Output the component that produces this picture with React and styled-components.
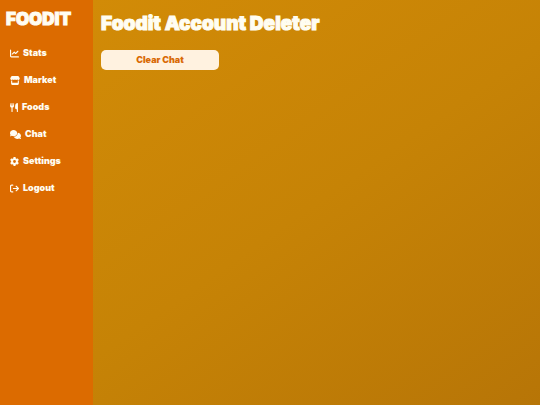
import * as React from 'react';
import styled, { createGlobalStyle } from 'styled-components';
import {
    FaChartLine,
    FaStore,
    FaUtensils,
    FaComments,
    FaGear,
    FaArrowRightFromBracket
} from 'react-icons/fa6';

const GlobalStyle = createGlobalStyle`
    * {
        box-sizing: border-box;
    }

    body {
        margin: 0;
        font-family: "Inter", "Liberation Sans", sans-serif;
        font-weight: 900;
        color: #fffdf2;
    }
`;

const Page = styled.div`
    display: flex;
    min-height: 100vh;
    background: #dc6b00;
`;

const Sidebar = styled.aside`
    flex: none;
    width: 93px;
    padding: 8px 6px;
`;

const Logo = styled.div`
    font-size: 17px;
    line-height: 22px;
    -webkit-text-stroke: 1px currentColor;
`;

const NavList = styled.ul`
    display: flex;
    flex-direction: column;
    gap: 15px;
    margin: 17px 0 0;
    padding: 0 0 0 4px;
    list-style: none;
`;

const NavLink = styled.a`
    display: flex;
    align-items: center;
    gap: 4px;
    font-size: 9px;
    line-height: 12px;
    color: #fffdf2;
    text-decoration: none;

    svg {
        flex: none;
        width: ${(props) => props.$iconWidth}px;
        height: 9px;
    }
`;

const Content = styled.main`
    flex: 1;
    padding: 8px;
    background: linear-gradient(145deg, #d28b07 0%, #c68306 50%, #b77507 100%);
`;

const Title = styled.h1`
    margin: 0 0 11px;
    font-size: 19px;
    font-weight: 900;
    line-height: 31px;
    -webkit-text-stroke: 1px currentColor;
`;

const ClearButton = styled.button`
    display: block;
    width: 118px;
    padding: 4px 8px;
    border: 0;
    border-radius: 5px;
    background: #fff2e0;
    color: #d96a05;
    font: inherit;
    font-size: 9px;
    line-height: 12px;
    cursor: pointer;
`;

const links = [
    { label: 'Stats', Icon: FaChartLine, iconWidth: 9 },
    { label: 'Market', Icon: FaStore, iconWidth: 10 },
    { label: 'Foods', Icon: FaUtensils, iconWidth: 8 },
    { label: 'Chat', Icon: FaComments, iconWidth: 11 },
    { label: 'Settings', Icon: FaGear, iconWidth: 9 },
    { label: 'Logout', Icon: FaArrowRightFromBracket, iconWidth: 9 }
];

export default function App() {
    return (
        <Page>
            <GlobalStyle />
            <Sidebar>
                <Logo>FOODIT</Logo>
                <nav>
                    <NavList>
                        {links.map(({ label, Icon, iconWidth }) => (
                            <li key={label}>
                                <NavLink href={`#${label.toLowerCase()}`} $iconWidth={iconWidth}>
                                    <Icon aria-hidden="true" />
                                    {label}
                                </NavLink>
                            </li>
                        ))}
                    </NavList>
                </nav>
            </Sidebar>
            <Content>
                <Title>Foodit Account Deleter</Title>
                <ClearButton type="button">Clear Chat</ClearButton>
            </Content>
        </Page>
    );
}
